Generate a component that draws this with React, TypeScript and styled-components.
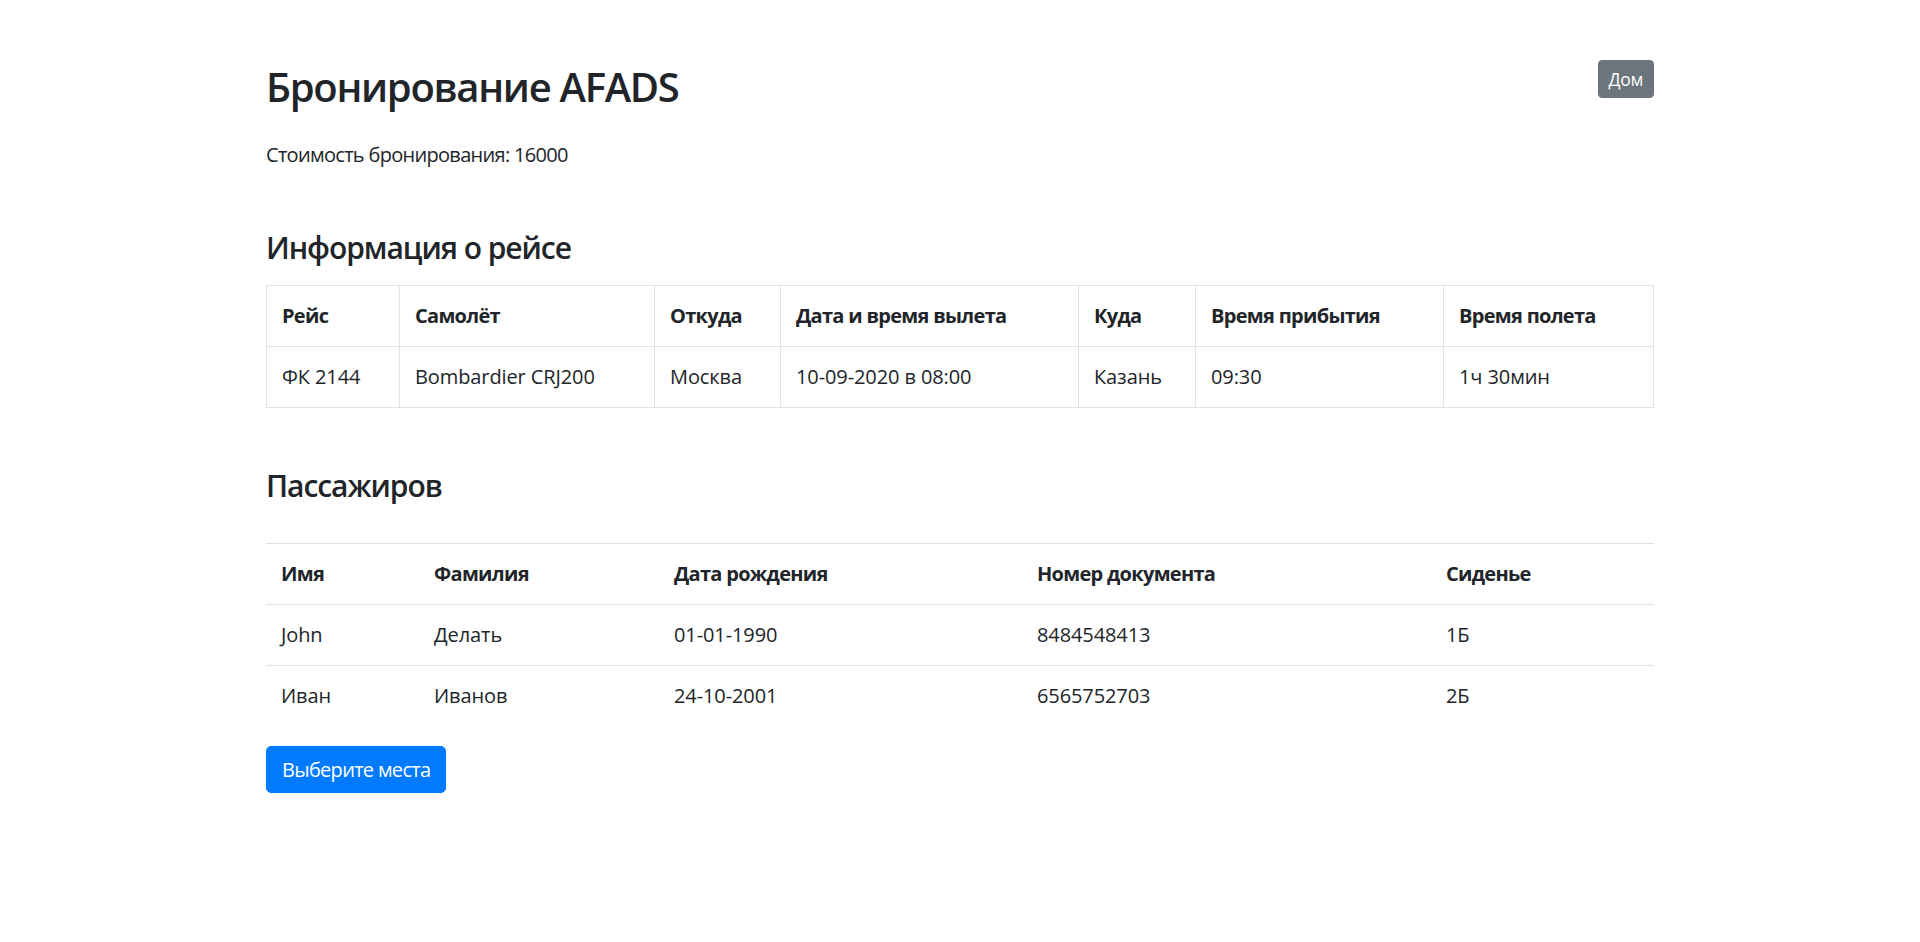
import React from "react";
import styled, { createGlobalStyle } from "styled-components";

const GlobalStyle = createGlobalStyle`
  html, body { margin: 0; padding: 0; background: #fff; }
  body {
    font-family: "Segoe UI", "Open Sans", "Noto Sans", Arial, sans-serif;
    font-size: 20px;
    line-height: 1.5;
    color: #212529;
  }
  * { box-sizing: border-box; }
`;

const Container = styled.div`
  width: 1388px;
  margin: 0 auto;
  padding-top: 60px;
`;

const Header = styled.header`
  display: flex;
  justify-content: space-between;
  align-items: flex-start;
  margin-bottom: 29px;
`;

const Title = styled.h2`
  margin: 0;
  padding-top: 3px;
  font-size: 40px;
  font-weight: 600;
  letter-spacing: -1.3px;
  line-height: 1.2;
`;

const Button = styled.button<{ $variant: "primary" | "secondary"; $small?: boolean }>`
  font-family: inherit;
  color: #fff;
  border: 1px solid ${(p) => (p.$variant === "primary" ? "#007bff" : "#6c757d")};
  background: ${(p) => (p.$variant === "primary" ? "#007bff" : "#6c757d")};
  font-size: ${(p) => (p.$small ? "17.5px" : "20px")};
  line-height: 1.5;
  padding: ${(p) => (p.$small ? "5px 10px" : "7.5px 15px")};
  border-radius: ${(p) => (p.$small ? "4px" : "5px")};
  letter-spacing: ${(p) => (p.$small ? "-0.3px" : "-0.7px")};
  cursor: pointer;
`;

const Cost = styled.p`
  margin: 0 0 20px;
  letter-spacing: -0.7px;
`;

const SectionTitle = styled.h4<{ $gap: number }>`
  margin: 60px 0 ${(p) => p.$gap}px;
  font-size: 30px;
  font-weight: 600;
  letter-spacing: -1.05px;
  line-height: 1.2;
`;

const Table = styled.table<{ $bordered?: boolean }>`
  width: 100%;
  table-layout: fixed;
  border-collapse: collapse;
  margin-bottom: 20px;
  ${(p) => (p.$bordered ? "border: 1px solid #dee2e6;" : "")}
`;

const Col = styled.col<{ $w: number }>`
  width: ${(p) => p.$w}px;
`;

const Cell = styled.td<{ $bordered?: boolean; $head?: boolean }>`
  padding: 15px;
  text-align: left;
  vertical-align: top;
  font-weight: ${(p) => (p.$head ? 700 : 400)};
  letter-spacing: ${(p) => (p.$head ? "-0.7px" : "-0.1px")};
  border-top: 1px solid #dee2e6;
  ${(p) => (p.$bordered ? "border: 1px solid #dee2e6;" : "")}
  white-space: nowrap;
`;

const flightCols = [133, 255, 126, 298, 117, 248, 210];
const flightHead = ["Рейс", "Самолёт", "Откуда", "Дата и время вылета", "Куда", "Время прибытия", "Время полета"];
const flightRow = ["ФК 2144", "Bombardier CRJ200", "Москва", "10-09-2020 в 08:00", "Казань", "09:30", "1ч 30мин"];

const paxCols = [153, 240, 363, 409, 223];
const paxHead = ["Имя", "Фамилия", "Дата рождения", "Номер документа", "Сиденье"];
const paxRows = [
  ["John", "Делать", "01-01-1990", "8484548413", "1Б"],
  ["Иван", "Иванов", "24-10-2001", "6565752703", "2Б"],
];

export default function App() {
  return (
    <>
      <GlobalStyle />
      <Container>
        <Header>
          <Title>Бронирование AFADS</Title>
          <Button $variant="secondary" $small>Дом</Button>
        </Header>
        <Cost>Стоимость бронирования: 16000</Cost>

        <SectionTitle $gap={19}>Информация о рейсе</SectionTitle>
        <Table $bordered>
          <colgroup>
            {flightCols.map((w, i) => (
              <Col key={i} $w={w} />
            ))}
          </colgroup>
          <thead>
            <tr>
              {flightHead.map((h) => (
                <Cell as="th" key={h} $bordered $head>{h}</Cell>
              ))}
            </tr>
          </thead>
          <tbody>
            <tr>
              {flightRow.map((c) => (
                <Cell key={c} $bordered>{c}</Cell>
              ))}
            </tr>
          </tbody>
        </Table>

        <SectionTitle $gap={39}>Пассажиров</SectionTitle>
        <Table>
          <colgroup>
            {paxCols.map((w, i) => (
              <Col key={i} $w={w} />
            ))}
          </colgroup>
          <thead>
            <tr>
              {paxHead.map((h) => (
                <Cell as="th" key={h} $head>{h}</Cell>
              ))}
            </tr>
          </thead>
          <tbody>
            {paxRows.map((r) => (
              <tr key={r[0]}>
                {r.map((c, i) => (
                  <Cell key={i}>{c}</Cell>
                ))}
              </tr>
            ))}
          </tbody>
        </Table>

        <Button $variant="primary">Выберите места</Button>
      </Container>
    </>
  );
}
